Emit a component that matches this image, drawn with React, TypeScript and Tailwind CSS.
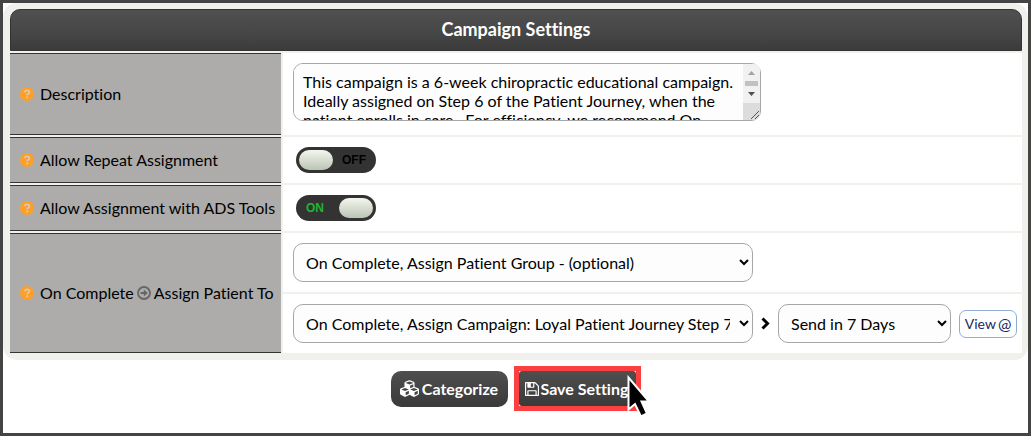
import { useState, type ReactNode } from 'react'
import { FaCubes } from 'react-icons/fa'

const campaignDescription =
  'This campaign is a 6-week chiropractic educational campaign. Ideally assigned on Step 6 of the Patient Journey, when the patient enrolls in care.  For efficiency, we recommend On Complete, Assign.'

const selectStyles =
  'h-[39px] min-w-0 rounded-[10px] border border-[#a6a6a6] bg-[#fdfdfd] pr-[6px] pl-2 text-base text-black'

const buttonStyles =
  'flex items-center bg-linear-to-b from-[#4f4f4f] via-[#444444] to-[#3a3a3a] text-base font-bold text-white'

function QuestionIcon() {
  return (
    <svg viewBox="0 0 14 14" className="mr-[6px] size-[14px] shrink-0" aria-hidden="true">
      <circle cx="7" cy="7" r="7" fill="#ff9f26" />
      <path d="M4.700 5.400C4.900 3.900 6 3.300 7.100 3.300c1.300 0 2.300.7 2.300 1.900 0 1.600-2.300 1.500-2.300 3.100" fill="none" stroke="#d8c8b4" strokeWidth="1.8" />
      <rect x="6.200" y="9.400" width="1.900" height="1.900" fill="#d8c8b4" />
    </svg>
  )
}

function ArrowCircleIcon() {
  return (
    <svg viewBox="0 0 14 14" className="size-[14px] shrink-0 text-[#666]" aria-hidden="true">
      <circle cx="7" cy="7" r="6" fill="none" stroke="currentColor" strokeWidth="1.8" />
      <path d="M3.600 5.900h3.200V3.500L10.800 7l-4 3.500V8.100H3.600z" fill="currentColor" />
    </svg>
  )
}

function ChevronIcon() {
  return (
    <svg viewBox="0 0 13 13" className="mx-[6px] size-[13px] shrink-0" aria-hidden="true">
      <path d="M3.500 1.500L8.500 6.500L3.500 11.500" fill="none" stroke="#000" strokeWidth="3" />
    </svg>
  )
}

function FloppyIcon() {
  return (
    <svg viewBox="0 128 1536 1536" className="size-[14px] shrink-0" fill="currentColor" aria-hidden="true">
      <path d="M384 1536h768v-384h-768v384zM1280 1536h128v-896q0-14-10-38.5t-20-34.5l-281-281q-10-10-34-20t-39-10v416q0 40-28 68t-68 28h-576q-40 0-68-28t-28-68v-416h-128v1280h128v-416q0-40 28-68t68-28h832q40 0 68 28t28 68v416zM896 608v-320q0-13-9.500-22.500t-22.500-9.500h-192q-13 0-22.500 9.500t-9.500 22.500v320q0 13 9.500 22.500t22.500 9.500h192q13 0 22.500-9.500t9.500-22.500zM1536 640v928q0 40-28 68t-68 28h-1344q-40 0-68-28t-28-68v-1344q0-40 28-68t68-28h928q40 0 88 20t76 48l280 280q28 28 48 76t20 88z" />
    </svg>
  )
}

function Cursor() {
  return (
    <svg viewBox="0 0 24 44" className="absolute top-[4px] left-[108px] h-[44px] w-[24px]" aria-hidden="true">
      <path d="M1.500 2.500V34.500L8 29L14 41.500L20 38.500L14.500 26.500H22z" fill="#000" stroke="#fff" strokeWidth="2" />
    </svg>
  )
}

function Scrollbar() {
  return (
    <svg
      viewBox="0 0 17 56"
      className="pointer-events-none absolute top-px right-px h-[56px] w-[17px] rounded-r-[6px]"
      aria-hidden="true"
    >
      <rect width="17" height="39" fill="#f1f1f1" />
      <path d="M5 11l3.500-4 3.500 4z" fill="#a3a3a3" />
      <rect x="2" y="17" width="13" height="5" fill="#c1c1c1" />
      <path d="M5 28l3.500 4 3.500-4z" fill="#505050" />
      <rect y="39" width="17" height="17" fill="#dcdcdc" />
      <path d="M8 55l8-8M12 55l4-4" stroke="#555" />
    </svg>
  )
}

function RowLabel({ htmlFor, className = '', children }: { htmlFor: string; className?: string; children: ReactNode }) {
  return (
    <label
      htmlFor={htmlFor}
      className={`flex items-center border-y border-[#333] bg-[#adacaa] pl-[10px] whitespace-nowrap ${className}`}
    >
      <QuestionIcon />
      {children}
    </label>
  )
}

function Toggle({ id, defaultOn }: { id: string; defaultOn: boolean }) {
  const [on, setOn] = useState(defaultOn)

  return (
    <label
      className={`relative flex h-[26px] w-[80px] items-center rounded-full bg-[#333] px-[3px] ${on ? 'flex-row-reverse' : ''}`}
    >
      <input
        id={id}
        type="checkbox"
        checked={on}
        onChange={(e) => setOn(e.target.checked)}
        className="absolute inset-0 cursor-pointer opacity-0"
      />
      <span className="h-[20px] w-[34px] rounded-full bg-linear-to-b from-[#f4f6ed] to-[#bbc4b6]" />
      <span
        className={`flex-1 font-['Liberation_Sans',sans-serif] text-xs font-bold ${on ? 'pl-[7px] text-[#20b52e]' : 'pl-[9px] text-black'}`}
      >
        {on ? 'ON' : 'OFF'}
      </span>
    </label>
  )
}

export default function App() {
  return (
    <div className="min-h-screen border-[3px] border-[#444] bg-white font-[Lato,sans-serif] text-base text-black [font-variant-ligatures:none]">
      <form onSubmit={(e) => e.preventDefault()}>
        <section className="rounded-[14px] bg-[#f0f0ec] pt-[6px] pr-[6px] pb-[7px] pl-[7px]">
          <h1 className="mb-[2px] flex h-[42px] items-center justify-center rounded-t-[10px] border border-[#333] bg-linear-to-b from-[#505050] via-[#464646] via-60% to-[#3b3b3b] pb-[2px] text-lg font-bold text-white">
            Campaign Settings
          </h1>

          <div className="grid grid-cols-[271px_1fr] gap-[2px]">
            <RowLabel htmlFor="description">Description</RowLabel>
            <div className="flex min-h-[82px] bg-white px-[10px] pt-[10px]">
              <div className="relative h-[58px] w-[468px]">
                <textarea
                  id="description"
                  defaultValue={campaignDescription}
                  className="block size-full resize-none rounded-[10px] border border-[#a6a6a6] bg-[#fdfdfd] py-2 pr-[24px] pl-[9px] leading-[19px]"
                />
                <Scrollbar />
              </div>
            </div>

            <RowLabel htmlFor="repeat">Allow Repeat Assignment</RowLabel>
            <div className="flex min-h-[46px] items-center bg-white px-[13px]">
              <Toggle id="repeat" defaultOn={false} />
            </div>

            <RowLabel htmlFor="ads-tools">Allow Assignment with ADS Tools</RowLabel>
            <div className="flex min-h-[46px] items-center bg-white px-[13px]">
              <Toggle id="ads-tools" defaultOn />
            </div>

            <RowLabel htmlFor="group" className="row-span-2">
              On Complete
              <span className="mx-[3px]">
                <ArrowCircleIcon />
              </span>
              Assign Patient To
            </RowLabel>
            <div className="flex min-h-[59px] items-center bg-white px-[10px]">
              <select id="group" className={`${selectStyles} w-[460px]`}>
                <option>On Complete, Assign Patient Group - (optional)</option>
              </select>
            </div>
            <div className="flex min-h-[59px] items-center bg-white pl-[10px]">
              <select aria-label="Campaign" className={`${selectStyles} w-[460px]`}>
                <option>On Complete, Assign Campaign: Loyal Patient Journey Step 7</option>
              </select>
              <ChevronIcon />
              <select aria-label="Delay" className={`${selectStyles} w-[173px]`}>
                <option>Send in 7 Days</option>
              </select>
              <button
                type="button"
                className="ml-2 flex h-[28px] w-[58px] shrink-0 items-center justify-center gap-[2px] rounded-[7px] border border-[#8fabd6] bg-white text-sm text-[#1c2a5e]"
              >
                View <span className="text-base leading-none">@</span>
              </button>
            </div>
          </div>
        </section>

        <div className="flex items-center justify-center gap-[6px] pt-[6px] pb-[6px]">
          <button type="button" className={`${buttonStyles} h-[36px] w-[117px] justify-center gap-[3px] rounded-[10px]`}>
            <FaCubes className="size-[19px]" />
            Categorize
          </button>
          <div className="relative border-[5px] border-[#fc4041]">
            <button type="submit" className={`${buttonStyles} h-[35px] w-[117px] gap-[2px] rounded-[3px] pl-[6px]`}>
              <FloppyIcon />
              Save Settings
            </button>
            <Cursor />
          </div>
        </div>
      </form>
    </div>
  )
}
